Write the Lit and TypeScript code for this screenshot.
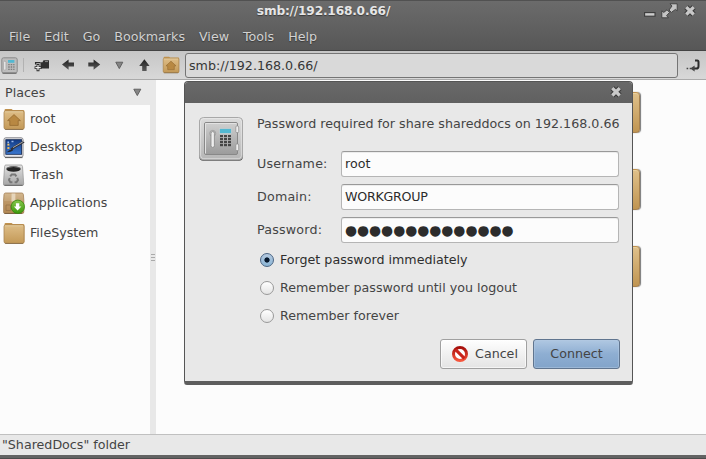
import { LitElement, html, css, svg } from "lit";
import { customElement } from "lit/decorators.js";

const closeIcon = svg`<svg width="14" height="14" viewBox="0 0 14 14">
  <path d="M3.3 3.1L10.7 10.5M10.7 3.1L3.3 10.5" stroke="#3a3a3a" stroke-width="5.4" stroke-linejoin="round"/>
  <path d="M3.3 3.1L10.7 10.5M10.7 3.1L3.3 10.5" stroke="#c8c8c8" stroke-width="3.3"/>
</svg>`;

const folderShape = svg`
  <path d="M1.5 2.2Q1.5 1 2.7 1H8.6L9.8 2H20.3Q21.5 2 21.5 3.5V19.8Q21.5 21.8 19.5 21.8H3.5Q1.5 21.8 1.5 19.8Z" fill="#c0914d"/>
  <path d="M1 4.6Q1 3 2.6 3H19.4Q21 3 21 4.6V19.4Q21 21.3 19.1 21.3H2.9Q1 21.3 1 19.4Z" fill="url(#wood)" stroke="#a98654" stroke-width=".8"/>
  <path d="M2 3.8H20" stroke="#ead5aa" stroke-width=".8"/>
  <path d="M2 21.6H20" stroke="#6b5b46" stroke-width=".8" opacity=".7"/>`;
const woodGradient = svg`<defs><linearGradient id="wood" x1="0" y1="0" x2="0" y2="1">
  <stop offset="0" stop-color="#debd87"/><stop offset="1" stop-color="#c39957"/></linearGradient></defs>`;
const house = svg`<path d="M4.6 12.6L11 6.6L17.4 12.6H15.2V17.4H6.8V12.6Z" fill="#b88842" stroke="#956b31" stroke-width=".8"/>`;

const folderIcon = svg`<svg width="22" height="23" viewBox="0 0 22 23">${woodGradient}${folderShape}</svg>`;
const homeIcon = svg`<svg width="22" height="23" viewBox="0 0 22 23">${woodGradient}${folderShape}${house}</svg>`;

const desktopIcon = svg`<svg width="22" height="23" viewBox="0 0 22 23">
  <defs><linearGradient id="screen" x1="0" y1="0" x2="0" y2="1"><stop offset="0" stop-color="#123a84"/><stop offset="1" stop-color="#3a78d0"/></linearGradient></defs>
  <rect x="1" y="1.8" width="19" height="19.4" rx="1.8" fill="#e8e8ec" stroke="#85858a"/>
  <path d="M2 21.6H19.5" stroke="#555" stroke-width=".9"/>
  <rect x="2.8" y="3.7" width="15.8" height="14.6" fill="url(#screen)" stroke="#12264f" stroke-width=".8"/>
  <path d="M5.2 5.5V7M8.5 5.5H10.5" stroke="#9dbcf0" stroke-width="1.6"/>
  <rect x="4.4" y="7.6" width="2" height="2" fill="#efc46d"/>
  <rect x="4.4" y="11" width="2" height="2" fill="#e5b45d"/>
  <path d="M8 13.6L12 10.8L21 5.6" stroke="#303238" stroke-width="2.2" fill="none"/>
  <path d="M3.6 16.2Q6.4 13.6 9 13.4L10 14.6Q7.2 16.6 3.6 16.2Z" fill="#23262e"/>
  <path d="M10 11.6L21 5.2" stroke="#b4b4b8" stroke-width=".9"/>
</svg>`;

const trashIcon = svg`<svg width="22" height="23" viewBox="0 0 22 23">
  <defs><linearGradient id="can" x1="0" y1="0" x2="0" y2="1"><stop offset="0" stop-color="#e2e2e2"/><stop offset="1" stop-color="#a5a5a5"/></linearGradient></defs>
  <path d="M2.8 1H18.2Q19.2 1 19.5 2.4L20.7 20Q20.7 21.5 19 21.5H2Q.4 21.5.4 20L1.6 2.4Q1.8 1 2.8 1Z" fill="url(#can)" stroke="#999" stroke-width=".8"/>
  <path d="M1.5 21.3H19.6" stroke="#666"/>
  <ellipse cx="10.5" cy="5" rx="7.2" ry="2.8" fill="#242424"/>
  <path d="M3.6 4Q10.5 1 17.4 4" stroke="#777" fill="none" stroke-width=".8"/>
  <g fill="none" stroke="#787878" stroke-width="2">
    <path d="M7.2 12.4L8.8 10.4H12L13.4 12.4"/><path d="M14.2 13.8L15 16L13.4 18.3H11.6"/><path d="M9.4 18.3H7.4L6 16L6.8 14"/>
  </g>
</svg>`;

const boxIcon = svg`<svg width="24" height="23" viewBox="0 0 24 23">
  <defs><linearGradient id="carton" x1="0" y1="0" x2="0" y2="1"><stop offset="0" stop-color="#d3b78f"/><stop offset="1" stop-color="#ad834f"/></linearGradient>
  <linearGradient id="leaf" x1="0" y1="0" x2="0" y2="1"><stop offset="0" stop-color="#86c64b"/><stop offset="1" stop-color="#3d9a0d"/></linearGradient></defs>
  <path d="M2.4 1H18.8Q20.2 1 20.4 2.6L20.8 8V20Q20.8 21.5 19.2 21.5H2Q.6 21.5.6 20V8L1 2.6Q1.2 1 2.4 1Z" fill="url(#carton)" stroke="#a58258" stroke-width=".8"/>
  <path d="M1 9H20.5V20.6H1Z" fill="#b68c58" opacity=".5"/>
  <path d="M8.6 1.4H12.4V9.4H8.4Z" fill="#eadcc4" opacity=".85"/>
  <path d="M3 13H7.5V18.5H3Z" fill="none" stroke="#98734a" stroke-width=".8"/>
  <path d="M1.5 21.5H19" stroke="#70573a" stroke-width=".8"/>
  <circle cx="14.8" cy="14.8" r="6.7" fill="url(#leaf)" stroke="#34860d" stroke-width=".8"/>
  <path d="M12.9 11.3H16.3V14.4H18.4L14.6 18.6L10.9 14.4H12.9Z" fill="#fff"/>
</svg>`;

const keypad = [0, 1, 2, 3].flatMap((r) => [0, 1, 2].map((c) => [22 + c * 4, 19 + r * 3]));
const safeIcon = svg`<svg width="46" height="47" viewBox="0 0 46 47">
  <defs><linearGradient id="steel" x1="0" y1="0" x2="0" y2="1"><stop offset="0" stop-color="#dcdcdc"/><stop offset="1" stop-color="#b6b6b6"/></linearGradient>
  <linearGradient id="door" x1="0" y1="0" x2="0" y2="1"><stop offset="0" stop-color="#d0d0d0"/><stop offset="1" stop-color="#9b9b9b"/></linearGradient></defs>
  <rect x="1.3" y="2.2" width="43.5" height="42.6" rx="4" fill="#4d4d4d"/>
  <rect x="1.5" y="1.5" width="43" height="42.2" rx="4" fill="url(#steel)" stroke="#a8a8a8"/>
  <rect x="2.6" y="2.6" width="40.8" height="40.1" rx="3" fill="none" stroke="#eee" stroke-width=".8" opacity=".7"/>
  <rect x="6.5" y="6.5" width="33" height="32" rx="1.5" fill="url(#door)" stroke="#888"/>
  <path d="M7.5 37.5V7.5H38.5" fill="none" stroke="#e2e2e2"/>
  <rect x="37.8" y="10" width="2.9" height="6.6" rx="1" fill="#eee" stroke="#909090" stroke-width=".8"/>
  <rect x="37.8" y="28" width="2.9" height="6.6" rx="1" fill="#eee" stroke="#909090" stroke-width=".8"/>
  <circle cx="14.7" cy="17.4" r="3" fill="#c4c4c4" stroke="#929292" stroke-width=".7"/>
  <rect x="13" y="15.6" width="3.4" height="15.8" rx="1.6" fill="#eee" stroke="#858585" stroke-width=".8"/>
  <rect x="21.5" y="12.5" width="12" height="5" fill="#53b8d1" stroke="#cfcfcf" stroke-width=".7"/>
  ${keypad.map(([x, y]) => svg`<rect x=${x} y=${y} width="3" height="2.2" fill="#454545"/>`)}
</svg>`;

const smallSafeIcon = svg`<svg width="17" height="17" viewBox="0 0 17 17">
  <rect x=".8" y=".8" width="15.4" height="15.2" rx="1.8" fill="#bdbdbd" stroke="#8a8a8a"/>
  <path d="M1.5 16.2H15.5" stroke="#606060"/>
  <rect x="2.7" y="4.2" width="2.2" height="9" rx="1" fill="#eee" stroke="#999" stroke-width=".6"/>
  <rect x="7" y="3" width="6.4" height="2.8" fill="#53b8d1"/>
  <path d="M7.2 7.6H13.5M7.2 10H13.5M7.2 12.4H13.5" stroke="#7c7c7c" stroke-width="1.4" stroke-dasharray="1.5 1"/>
</svg>`;

const newTabIcon = svg`<svg width="16" height="13" viewBox="0 0 16 13">
  <path d="M6.5 3.2H8.5L9.5 1.2H15V9.6H6.5Z" fill="#2f2f2f"/>
  <path d="M11 2.6H14" stroke="#999" stroke-width=".9"/>
  <path d="M1.6 5.5V3.6H6.5" stroke="#2c2c2c" stroke-width="1.3" fill="none"/>
  <path d="M4 5V12.2M.6 8.6H7.6" stroke="#2a2a2a" stroke-width="2.9"/>
  <path d="M4 5.9V11.3M1.4 8.6H6.7" stroke="#eee" stroke-width="1.2"/>
</svg>`;
const arrowDefs = svg`<defs><linearGradient id="ink" x1="0" y1="0" x2="0" y2="1"><stop offset="0" stop-color="#202020"/><stop offset="1" stop-color="#5a5a5a"/></linearGradient></defs>`;
const leftIcon = svg`<svg width="13" height="12" viewBox="0 0 13 12">${arrowDefs}<path d="M0 5.6L6.6 .4V3.6H12V7.6H6.6V10.8Z" fill="url(#ink)"/></svg>`;
const rightIcon = svg`<svg width="13" height="12" viewBox="0 0 13 12">${arrowDefs}<path d="M12.2 5.6L5.6 .4V3.6H.3V7.6H5.6V10.8Z" fill="url(#ink)"/></svg>`;
const upIcon = svg`<svg width="11" height="13" viewBox="0 0 11 13">${arrowDefs}<path d="M5.4 .2L10.6 7H7.6V12H3.2V7H.2Z" fill="url(#ink)"/></svg>`;
const triangleIcon = svg`<svg width="9" height="9" viewBox="0 0 9 9"><path d="M.8 1.2H7.8L4.3 7.6Z" fill="#858585" stroke="#595959" stroke-width=".9"/></svg>`;
const goIcon = svg`<svg width="14" height="13" viewBox="0 0 14 13">
  <path d="M9 1.4H11.2Q12.5 1.4 12.5 3V7.2Q12.5 9.6 10.2 9.6H7" fill="none" stroke="#2c2c2c" stroke-width="2"/>
  <path d="M4.2 9.6L8.6 6.4V12.6Z" fill="#444"/>
  <path d="M.6 9.6H5" stroke="#444" stroke-width="1.5" stroke-dasharray="1.6 1.5"/>
</svg>`;
const minimizeIcon = svg`<svg width="12" height="5" viewBox="0 0 12 5"><rect x=".6" y=".6" width="10.4" height="3.6" fill="#ccc" stroke="#3b3b3b" stroke-width="1.1"/></svg>`;
const maximizeIcon = svg`<svg width="17" height="16" viewBox="0 0 17 16">
  <g fill="#c4c4c4" stroke="#3c3c3c" stroke-width=".9" stroke-linejoin="round">
    <path d="M9 .8H16.2V7.8L14.4 6.4L10.4 9.4L8 7L11 3Z"/>
    <path d="M.8 7.8L2.8 9.4L6 6.8L8.6 9.4L5.6 12.6L7.4 14.8H.8Z"/>
  </g></svg>`;
const stopIcon = svg`<svg width="18" height="18" viewBox="0 0 18 18">
  <defs><linearGradient id="red" x1="0" y1="0" x2="0" y2="1"><stop offset="0" stop-color="#a60f0b"/><stop offset="1" stop-color="#f5553c"/></linearGradient></defs>
  <circle cx="9" cy="9" r="6.5" fill="#fff" stroke="url(#red)" stroke-width="3"/>
  <path d="M4.6 4.6L13.4 13.4" stroke="#c9231a" stroke-width="3"/></svg>`;

const menus = ["File", "Edit", "Go", "Bookmarks", "View", "Tools", "Help"];
const places = [
  { name: "root", icon: homeIcon },
  { name: "Desktop", icon: desktopIcon },
  { name: "Trash", icon: trashIcon },
  { name: "Applications", icon: boxIcon },
  { name: "FileSystem", icon: folderIcon },
];
const fields = [
  { label: "Username:", value: "root", kind: "" },
  { label: "Domain:", value: "WORKGROUP", kind: "caps" },
  { label: "Password:", value: "●".repeat(14), kind: "secret" },
];
const choices = ["Forget password immediately", "Remember password until you logout", "Remember forever"];

@customElement("share-login-dialog")
class ShareLoginDialog extends LitElement {
  static styles = css`
    :host { display: flex; flex-direction: column; box-sizing: border-box; width: 449px; height: 304px;
      background: #e8e8e8; border: 1px solid #555; border-bottom: 4px solid #5d5d5d;
      border-radius: 4px 4px 3px 3px; overflow: hidden; color: #444; }
    svg { display: block; flex: none; }
    .bar { flex: none; height: 21px; background: linear-gradient(#696969, #606060);
      display: flex; justify-content: flex-end; padding-right: 9px; box-sizing: border-box; }
    .bar svg { margin-top: 3px; }
    .body { display: flex; padding: 13px 13px 0 13px; gap: 12px; }
    .main { flex: 1; min-width: 0; padding-left: 1px; }
    .prompt { line-height: 16px; height: 35px; letter-spacing: .02px; white-space: nowrap; }
    .row { display: grid; grid-template-columns: 84px 1fr; height: 26px; margin-bottom: 7px; align-items: center; }
    .label { line-height: 16px; letter-spacing: .2px; white-space: nowrap; }
    .entry { height: 26px; box-sizing: border-box; border: 1px solid #b5b5b5; border-top-color: #999;
      border-radius: 3px; background: #fcfcfc; box-shadow: inset 0 1px 0 #ececec; padding-left: 3px;
      line-height: 24px; color: #2c2c2c; white-space: nowrap; overflow: hidden; }
    .caps { letter-spacing: -.27px; }
    .secret { font-size: 13.8px; line-height: 25px; }
    .choices { margin-top: -4px; }
    .choice { display: flex; align-items: center; height: 28px; gap: 6px; padding-left: 3px; white-space: nowrap; }
    .choice span:last-child { padding-bottom: 2px; }
    .radio { box-sizing: border-box; width: 14px; height: 14px; border-radius: 50%; border: 1px solid #999;
      background: linear-gradient(#fff, #e4e4e4); }
    .on .radio { border-color: #4b6584; background: radial-gradient(circle, #06182d 0 2.2px, transparent 3px), linear-gradient(#b5c9df, #8bb6d6); }
    .on { color: #2e2e2e; }
    .actions { display: flex; justify-content: flex-end; gap: 6px; padding: 9px 12px 0 0; }
    .button { box-sizing: border-box; width: 87px; height: 30px; border: 1px solid #a0a0a0; border-radius: 3px;
      background: linear-gradient(#fefefe, #e4e4e4); box-shadow: inset 0 0 0 1px #ffffffa0;
      display: flex; align-items: center; justify-content: center; gap: 6px; }
    .button svg { margin-left: 2px; }
    .button span { padding-bottom: 1px; }
    .primary { border-color: #60758f; background: linear-gradient(#b0c8e2, #8eaed2 50%, #82a4ca); box-shadow: inset 0 0 0 1px #b3cae280; }
  `;
  render() {
    return html`
      <div class="bar">${closeIcon}</div>
      <div class="body">
        ${safeIcon}
        <div class="main">
          <div class="prompt">Password required for share shareddocs on 192.168.0.66</div>
          ${fields.map((f) => html`<div class="row"><span class="label">${f.label}</span>
            <div class="entry ${f.kind}">${f.value}</div></div>`)}
          <div class="choices">
            ${choices.map((c, i) => html`<div class="choice ${i === 0 ? "on" : ""}"><span class="radio"></span><span>${c}</span></div>`)}
          </div>
        </div>
      </div>
      <div class="actions">
        <div class="button">${stopIcon}<span>Cancel</span></div>
        <div class="button primary"><span>Connect</span></div>
      </div>`;
  }
}

@customElement("app-root")
class AppRoot extends LitElement {
  static styles = css`
    :host { position: relative; display: flex; flex-direction: column; width: 706px; height: 459px; overflow: hidden;
      font: 12.67px "DejaVu Sans", sans-serif; color: #444; background: #fcfcfc; }
    svg { display: block; flex: none; }
    .top { flex: none; height: 51px; box-sizing: border-box; border-top: 1px solid #515151; border-bottom: 1px solid #434343;
      background: linear-gradient(#6b6b6b, #575757); text-shadow: 0 1px 1px #3a3a3a; }
    .titlebar { display: grid; grid-template-columns: 66px 1fr 63px; height: 22px; }
    .title { grid-column: 2; text-align: center; font-size: 12.2px; letter-spacing: -.2px; font-weight: bold; color: #e6e6e6; line-height: 20px; padding-right: 62px; }
    .controls { display: flex; align-items: center; gap: 5px; height: 20px; padding-left: 1px; }
    .controls svg:first-child { margin-top: 7px; }
    .menus { display: flex; gap: 14px; padding-left: 9px; line-height: 28px; color: #d2d2d2; }
    .toolbar { flex: none; height: 29px; box-sizing: border-box; border-bottom: 1px solid #aaa; display: flex; align-items: center;
      background: linear-gradient(#c6c6c6, #d8d8d8); padding: 0 6px 0 1px; }
    .divider { width: 1px; height: 14px; background: #b2b2b2; margin: 0 10px 0 5px; }
    .tools { display: flex; align-items: center; gap: 13px; width: 117px; }
    .tools svg:first-child { margin-right: -1px; }
    .tools svg:nth-child(4) { margin: 0 2px 0 1px; }
    .home { margin: 0 5px 0 11px; width: 18px; }
    .home svg { width: 18px; height: 18px; }
    .address { flex: 1; height: 25px; box-sizing: border-box; border: 1px solid #757575; border-radius: 3px; background: #d9d9d9;
      padding-left: 3px; line-height: 24px; color: #363636; margin-right: 8px; }
    .content { flex: 1; display: flex; min-height: 0; }
    .side { width: 150px; display: flex; flex-direction: column; }
    .heading { background: #e8e8e8; height: 25px; line-height: 25px; display: flex; justify-content: space-between;
      align-items: center; padding: 0 8px 0 5px; }
    .places { padding: 0 0 0 3px; }
    .place { display: flex; height: 28px; align-items: center; }
    .place:last-child { height: 32px; }
    .name { padding-bottom: 1.5px; }
    .glyph { width: 27px; }
    .handle { width: 6px; background: #e8e8e8; display: flex; flex-direction: column; align-items: center; padding-top: 174px; box-sizing: border-box; }
    .handle i { width: 4px; height: 1px; background: #aaa; margin-bottom: 2px; }
    .files { flex: 1; display: flex; flex-direction: column; gap: 36px; padding: 12px 0 0 436px; }
    .file { width: 48px; height: 41px; box-sizing: border-box; border: 1px solid #a78250; border-top-color: #c0914d; border-radius: 4px;
      background: linear-gradient(#dfc08a, #c09552); box-shadow: 1px 0 1px #777, inset 0 1px 0 #e8d09f; }
    .status { flex: none; height: 21px; box-sizing: border-box; border-top: 1px solid #c0c0c0; background: #e8e8e8; line-height: 20px; padding-left: 2px; }
    .frame { flex: none; height: 4px; background: linear-gradient(#636363 75%, #4c4c4c 75%); }
    share-login-dialog { position: absolute; left: 184px; top: 81px; }
  `;
  render() {
    return html`
      <div class="top">
        <div class="titlebar">
          <div class="title">smb://192.168.0.66/</div>
          <div class="controls">${minimizeIcon}${maximizeIcon}${closeIcon}</div>
        </div>
        <div class="menus">${menus.map((m) => html`<span>${m}</span>`)}</div>
      </div>
      <div class="toolbar">
        ${smallSafeIcon}<span class="divider"></span>
        <div class="tools">${newTabIcon}${leftIcon}${rightIcon}${triangleIcon}${upIcon}</div>
        <div class="home">${homeIcon}</div>
        <div class="address">smb://192.168.0.66/</div>
        ${goIcon}
      </div>
      <div class="content">
        <div class="side">
          <div class="heading"><span>Places</span>${triangleIcon}</div>
          <div class="places">${places.map((p) => html`<div class="place"><span class="glyph">${p.icon}</span><span class="name">${p.name}</span></div>`)}</div>
        </div>
        <div class="handle"><i></i><i></i><i></i></div>
        <div class="files">${[0, 1, 2].map(() => html`<div class="file"></div>`)}</div>
      </div>
      <div class="status">"SharedDocs" folder</div>
      <div class="frame"></div>
      <share-login-dialog></share-login-dialog>`;
  }
}
